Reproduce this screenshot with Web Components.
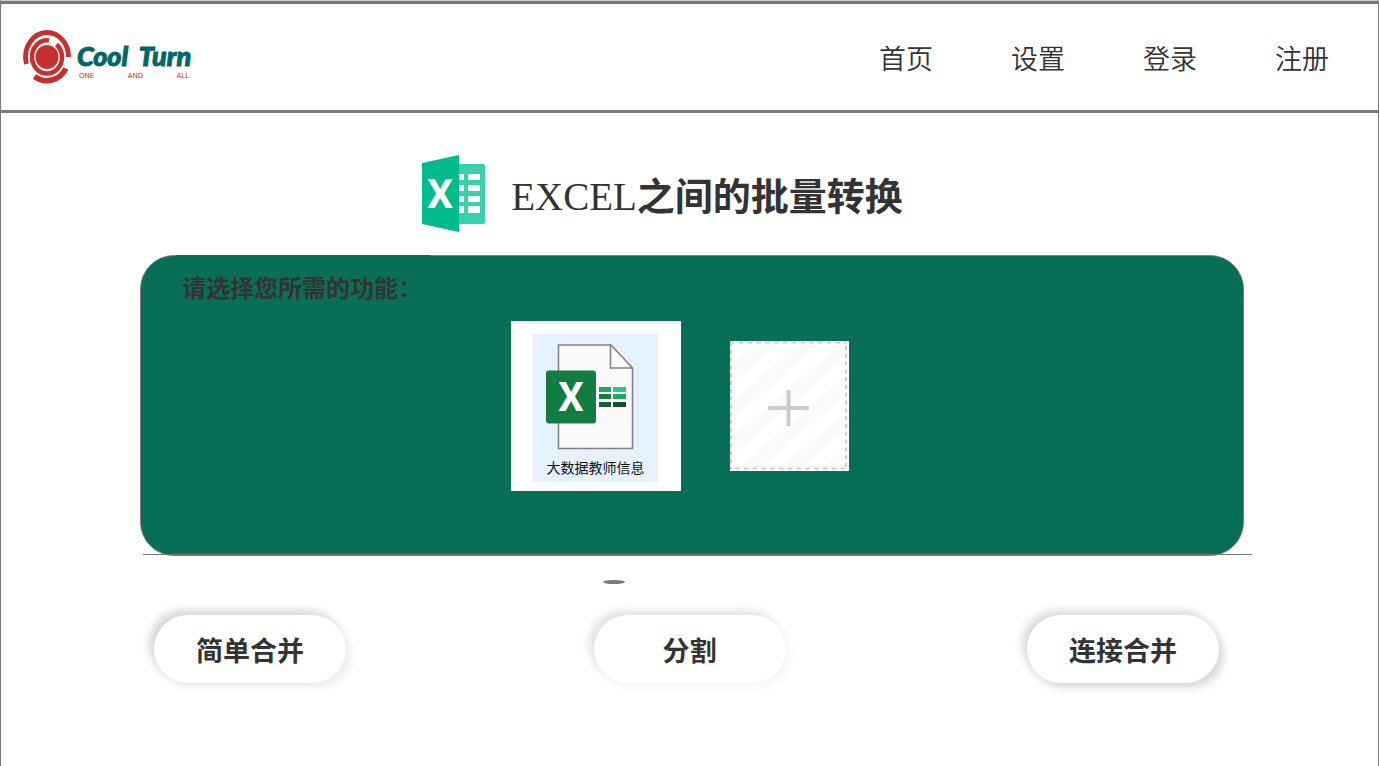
<!DOCTYPE html>
<html lang="zh-CN">
<head>
<meta charset="utf-8">
<title>Cool Turn</title>
<style>
html { background: #fff; }
body {
  margin: 0;
  font-family: "Noto Sans CJK SC", "Noto Sans", sans-serif;
  color: #333;
}
</style>
</head>
<body>
<ct-page>
  <ct-header slot="header">
    <ct-logo slot="logo"></ct-logo>
    <ct-nav-link>首页</ct-nav-link>
    <ct-nav-link>设置</ct-nav-link>
    <ct-nav-link>登录</ct-nav-link>
    <ct-nav-link>注册</ct-nav-link>
  </ct-header>
  <ct-title><span slot="latin">EXCEL</span>之间的批量转换</ct-title>
  <ct-panel>
    <span slot="label">请选择您所需的功能：</span>
    <ct-file>大数据教师信息</ct-file>
    <ct-add></ct-add>
  </ct-panel>
  <ct-actions>
    <ct-button class="soft">简单合并</ct-button>
    <ct-button class="faint">分割</ct-button>
    <ct-button class="strong">连接合并</ct-button>
  </ct-actions>
</ct-page>

<script>
const define = (name, html) => {
  const template = document.createElement('template');
  template.innerHTML = html;
  customElements.define(name, class extends HTMLElement {
    constructor() {
      super();
      this.attachShadow({ mode: 'open' }).append(template.content.cloneNode(true));
    }
  });
};

define('ct-page', `
<style>
  :host {
    display: block; box-sizing: border-box; min-height: 100vh;
    border: 1px solid #797979; border-top-color: #ccc; border-bottom: 0;
  }
</style>
<slot name="header"></slot>
<main><slot></slot></main>`);

define('ct-header', `
<style>
  :host { display: block; }
  header {
    display: flex; align-items: center; justify-content: space-between;
    box-sizing: border-box; height: 112px; padding: 2px 49px 0 22px;
    border-top: 3px solid #797979; border-bottom: 3px solid #797979;
  }
  nav { display: flex; gap: 78px; }
</style>
<header>
  <slot name="logo"></slot>
  <nav><slot></slot></nav>
</header>`);

define('ct-nav-link', `
<style>
  :host { display: block; }
  a { color: inherit; text-decoration: none; font-size: 27px; line-height: 40px; font-weight: 350; }
</style>
<a href="#"><slot></slot></a>`);

define('ct-logo', `
<style>
  :host { display: flex; align-items: center; gap: 5px; }
  svg { display: block; }
  .words { padding-top: 4px; }
  .name {
    font: italic 900 27px/32px Lato, "Liberation Sans", sans-serif; color: #006767;
    -webkit-text-stroke: 1px #006767; white-space: pre;
  }
  .tag {
    display: flex; justify-content: space-between; padding: 0 2px;
    font: 7px/8px "DejaVu Sans", sans-serif; color: #c4302f;
  }
</style>
<svg width="49" height="56" viewBox="0 0 49 56" fill="none" stroke="#c4302f" aria-hidden="true">
  <ellipse cx="24" cy="27" rx="11.500" ry="12" fill="#c4302f" stroke="none"/>
  <path d="M26 10.500A15 16.500 0 0 0 9 27A15 16.500 0 0 0 24 43.500A15 16.500 0 0 0 39 27A15 16.500 0 0 0 33.500 14.500" stroke-width="4.500"/>
  <path d="M3.500 34A21.500 24.500 0 0 1 24 2.500A21.500 24.500 0 0 1 45.500 27" stroke-width="4.800"/>
  <path d="M11.500 46.500A22 24 0 0 0 43 38.500" stroke-width="5.500"/>
</svg>
<div class="words">
  <div class="name">Cool  Turn</div>
  <div class="tag"><span>ONE</span><span>AND</span><span>ALL</span></div>
</div>`);

define('ct-title', `
<style>
  :host { display: block; padding: 42px 54px 23px 0; }
  h1 {
    display: flex; align-items: center; justify-content: center; gap: 25px; margin: 0;
    font-size: 38px; line-height: 60px; font-weight: 700;
  }
  h1 > span { padding-top: 3px; }
  svg { display: block; }
  ::slotted([slot="latin"]) { font-family: "Liberation Serif", serif; font-size: 39px; font-weight: 400; }
</style>
<h1>
  <svg width="64" height="77" viewBox="0 0 64 77" aria-hidden="true">
    <rect x="34" y="9" width="29" height="60" rx="2" fill="#39d0ab"/>
    <path d="M0 8L37 0V77L0 69Z" fill="#00bb8b"/>
    <g fill="#fff">
      <path d="M37 19h5v6h-5zM37 30h5v6h-5zM37 41h5v6h-5zM37 51h5v7h-5z"/>
      <path d="M46 19h12v6H46zM46 30h12v6H46zM46 41h12v6H46zM46 51h12v7H46z"/>
    </g>
    <text x="18" y="53" text-anchor="middle" font-family="Roboto" font-size="41" font-weight="700" fill="#fff">X</text>
  </svg>
  <span><slot name="latin"></slot><slot></slot></span>
</h1>`);

define('ct-panel', `
<style>
  :host { display: block; padding: 0 126px 0 139px; }
  section {
    position: relative; box-sizing: border-box; margin-right: 8px; padding: 14px 24px 64px 0;
    border: 1px solid #797979; border-radius: 34px; background: #086f56;
  }
  section::before {
    content: ""; position: absolute; top: -1px; left: 35px; width: 254px; height: 1px; background: #086f56;
  }
  h2 { margin: 0 0 17px 41px; font-size: 24px; line-height: 34px; font-weight: 700; }
  .files { display: flex; align-items: center; justify-content: center; gap: 49px; }
  hr { margin: -2px 0 0 3px; border: 0; height: 1px; background: #797979; position: relative; }
</style>
<section>
  <h2><slot name="label"></slot></h2>
  <div class="files"><slot></slot></div>
</section>
<hr>`);

define('ct-file', `
<style>
  :host { display: block; background: #fff; }
  figure {
    box-sizing: border-box; width: 125px; height: 148px; margin: 13px 23px 9px 22px;
    padding-top: 10px; background: #e5f2fe;
  }
  svg { display: block; margin: 0 auto; }
  figcaption { font-size: 14px; line-height: 20px; margin-top: 7px; text-align: center; color: #111; white-space: nowrap; }
</style>
<figure>
  <svg width="99" height="106" viewBox="0 0 99 106" aria-hidden="true">
    <path d="M12.500 1H65L86.500 24V104.500H12.500Z" fill="#fafafa" stroke="#808080" stroke-width="1.500"/>
    <path d="M64.500 1V24H86.500" fill="none" stroke="#808080" stroke-width="1.500"/>
    <rect y="26.500" width="50" height="53" rx="3" fill="#127d41"/>
    <path d="M53 43h12v5H53z" fill="#23a565"/><path d="M67 43h13v5H67z" fill="#35c481"/>
    <path d="M53 50h12v5H53z" fill="#127d41"/><path d="M67 50h13v5H67z" fill="#23a565"/>
    <path d="M53 58h12v5H53z" fill="#1a5c38"/><path d="M67 58h13v5H67z" fill="#174a2e"/>
    <text x="25" y="67" text-anchor="middle" font-family="Roboto" font-size="40" font-weight="700" fill="#fff">X</text>
  </svg>
  <figcaption><slot></slot></figcaption>
</figure>`);

define('ct-add', `
<style>
  :host { display: block; }
  button { display: block; padding: 0; border: 0; cursor: pointer; }
  svg { display: block; }
</style>
<button type="button" aria-label="添加文件">
  <svg width="119" height="130" viewBox="0 0 119 130" aria-hidden="true">
    <defs>
      <pattern id="stripes" y="8" width="42" height="36" patternUnits="userSpaceOnUse">
        <rect width="42" height="36" fill="#fff"/>
        <path d="M0 36L42 0H21L0 18ZM42 36V18L21 36Z" fill="#fafafa"/>
      </pattern>
    </defs>
    <rect width="119" height="130" fill="url(#stripes)"/>
    <path d="M0 1.500H117M5 127.500H117" stroke="#ccc" stroke-width="2" stroke-dasharray="4.500 4.300" fill="none"/>
    <path d="M1 1V128M116 5V128" stroke="#ccc" stroke-width="2" stroke-dasharray="4 3.800" fill="none"/>
    <path d="M38 67H79M58.500 49V85" stroke="#ccc" stroke-width="4"/>
  </svg>
</button>`);

define('ct-actions', `
<style>
  :host {
    display: grid; grid-template-columns: 1fr auto 1fr; padding: 25px 0 60px;
  }
  .mark { grid-column: 1 / -1; margin: 0 0 31px 602px; width: 22px; height: 4px; border-radius: 50%; background: #797979; }
  ::slotted(:first-child) { justify-self: start; margin-left: 153px; }
  ::slotted(:last-child) { justify-self: end; margin-right: 159px; }
</style>
<div class="mark"></div>
<slot></slot>`);

define('ct-button', `
<style>
  :host { display: block; }
  :host(.soft) { --dark: #d7d7d7; --light: #eee; }
  :host(.faint) { --dark: #e2e2e2; --light: #f7f7f7; }
  :host(.strong) { --dark: #dbdbdb; --light: #d8d8d8; }
  button {
    display: block; width: 192px; height: 68px; padding: 1px 0 0; border: 0; border-radius: 34px;
    background: #fff; color: inherit; font-family: inherit; font-size: 27px; line-height: 40px; font-weight: 700;
    box-shadow: -5px -5px 8px var(--dark), 5px 5px 8px var(--light); cursor: pointer;
  }
</style>
<button type="button"><slot></slot></button>`);
</script>
</body>
</html>
